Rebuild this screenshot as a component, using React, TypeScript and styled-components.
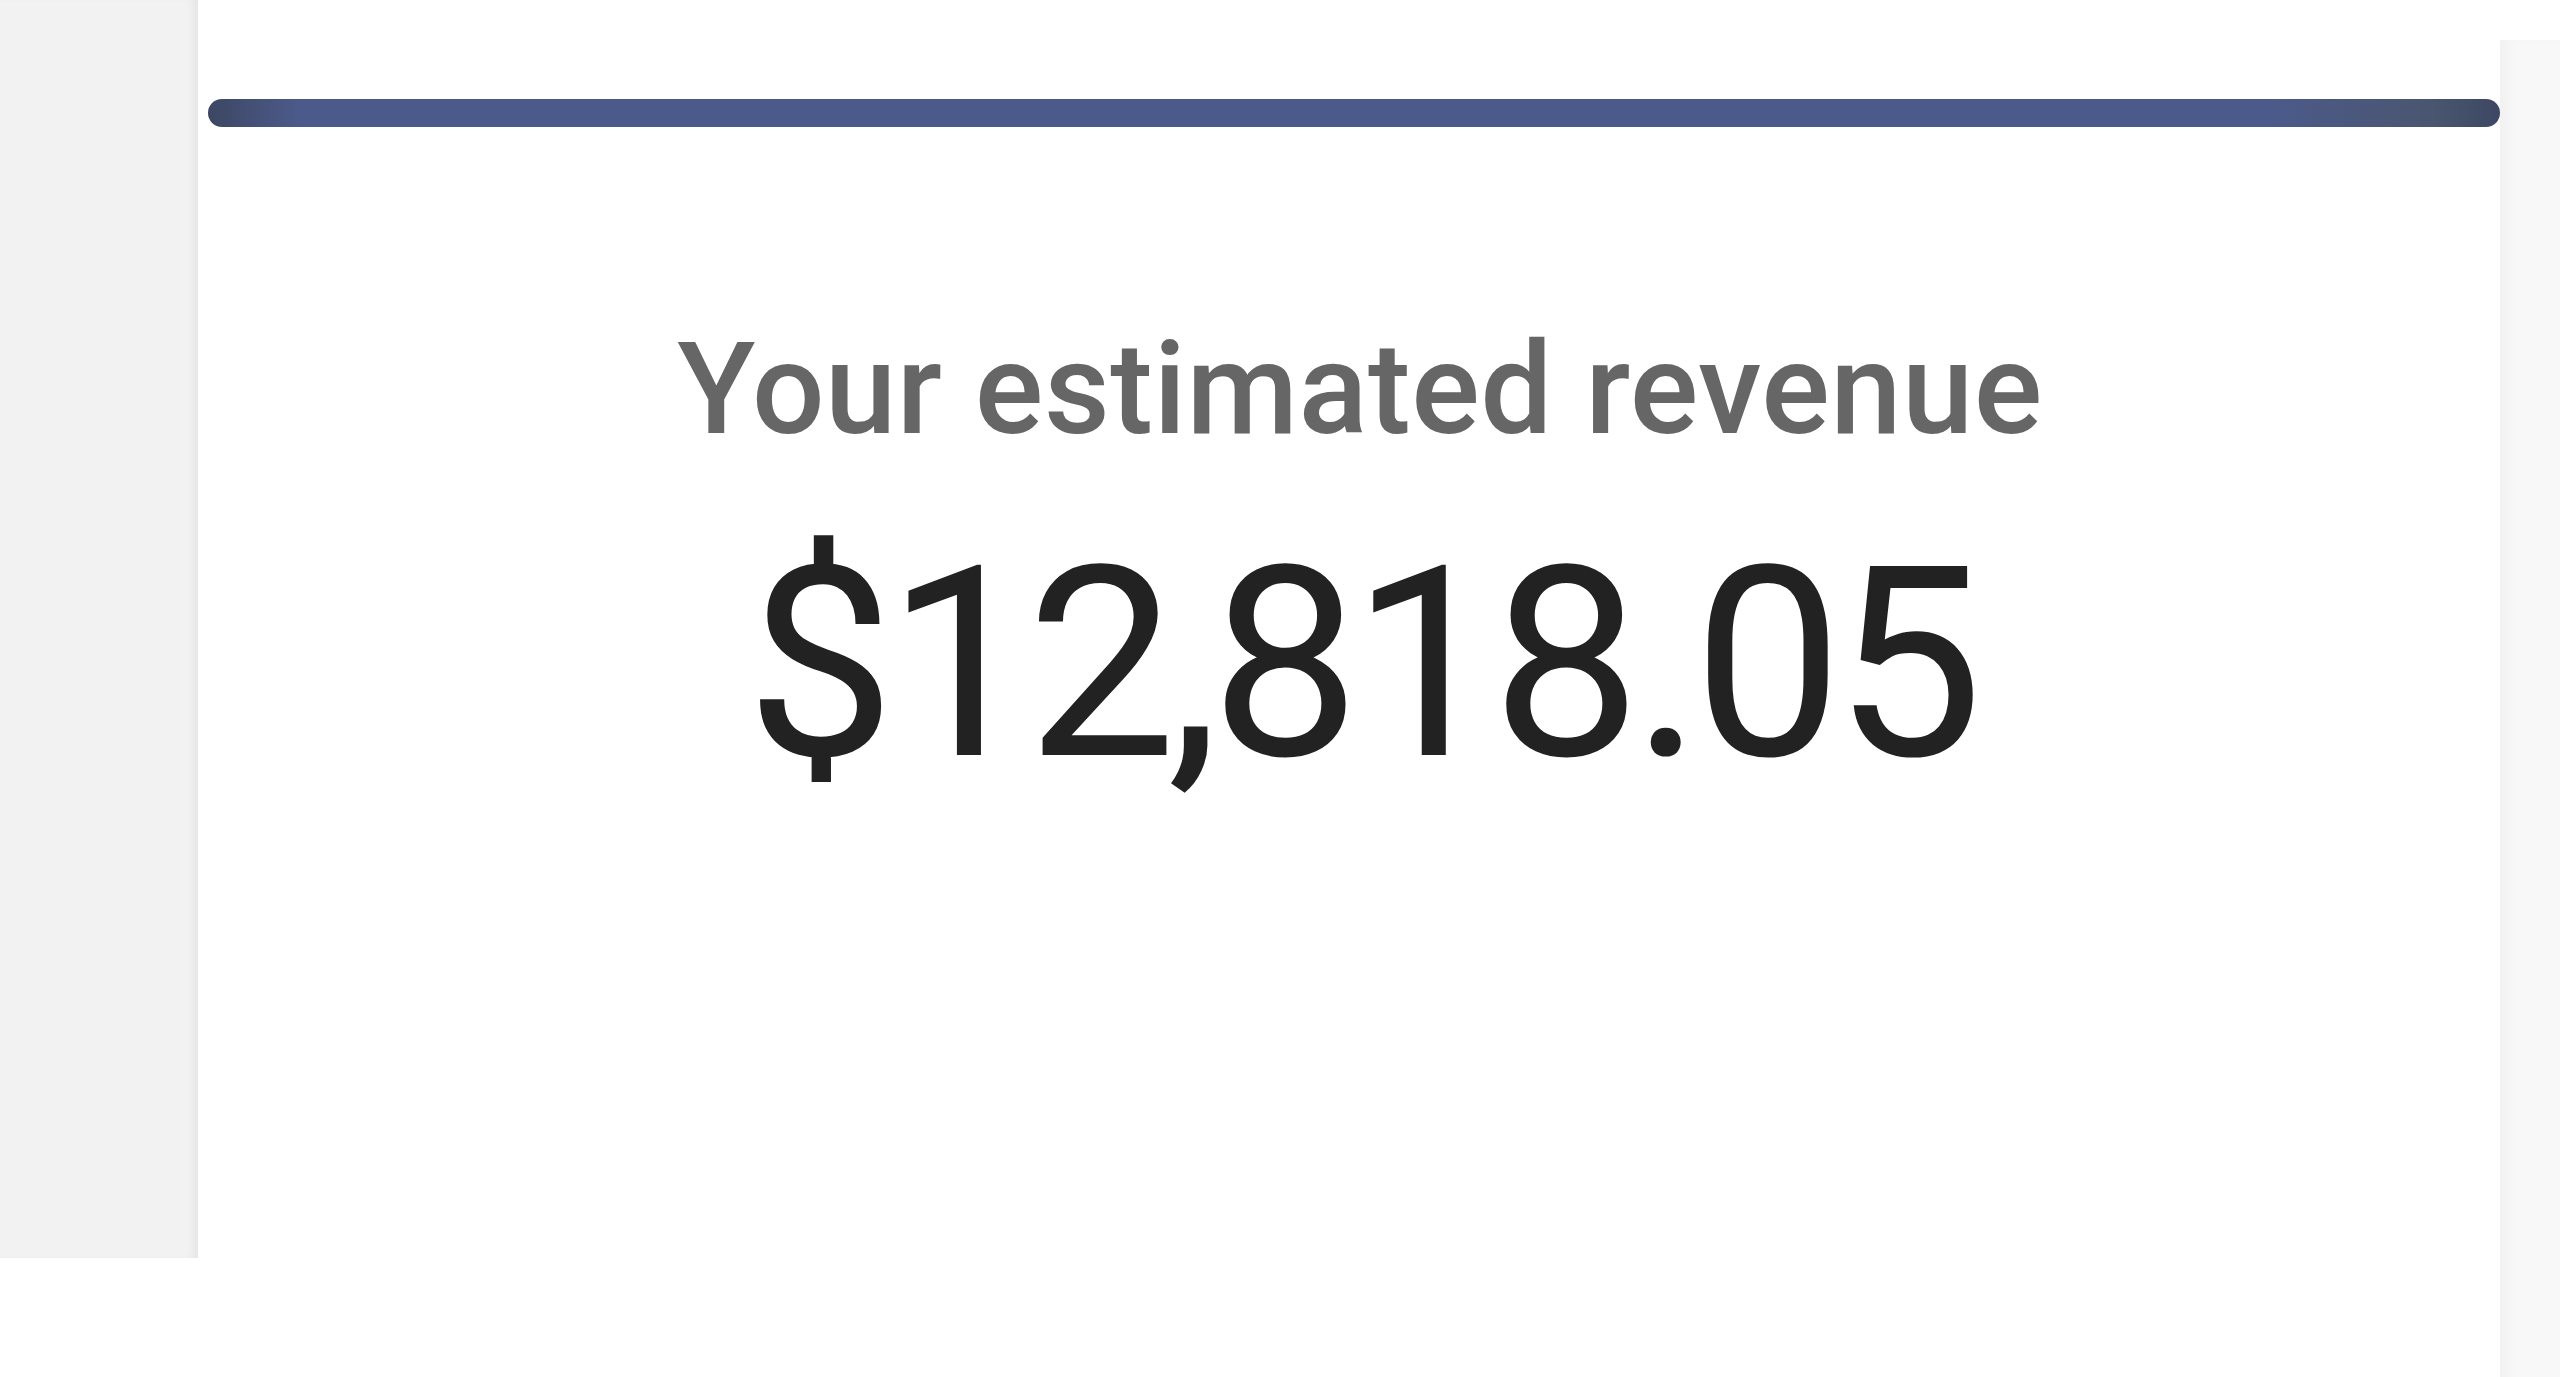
import styled, { createGlobalStyle } from "styled-components";

const GlobalStyle = createGlobalStyle`
  html, body {
    margin: 0;
    padding: 0;
    background: #ffffff;
  }
  body {
    font-family: Roboto, "Liberation Sans", Arial, sans-serif;
  }
`;

const Page = styled.div`
  display: flex;
  align-items: flex-start;
  width: 2560px;
  height: 1377px;
  overflow: hidden;
  background: #ffffff;
`;

const SidePanel = styled.div<{ $side: "left" | "right" }>`
  flex: none;
  width: ${(p) => (p.$side === "left" ? "198px" : "60px")};
  height: ${(p) => (p.$side === "left" ? "1258px" : "1377px")};
  margin-top: ${(p) => (p.$side === "left" ? "0" : "40px")};
  background: ${(p) => (p.$side === "left" ? "#f2f2f2" : "#f8f8f8")};
  box-shadow: ${(p) =>
    p.$side === "left"
      ? "inset -8px 0 10px -4px rgba(0, 0, 0, 0.06)"
      : "inset 14px 0 16px -6px rgba(0, 0, 0, 0.03)"};
`;

const Card = styled.div`
  flex: 1;
  display: flex;
  flex-direction: column;
  align-items: center;
  padding: 99px 0 0 12px;
  margin-left: 10px;
  min-height: 1278px;
  background: #ffffff;
`;

const TopBar = styled.div`
  align-self: stretch;
  margin-left: -12px;
  height: 28px;
  border-radius: 14px;
  background: linear-gradient(
    90deg,
    #3d4763 0%,
    #4b5a8a 4%,
    #4b5a8a 90%,
    #4a5670 97%,
    #3d4763 100%
  );
`;

const Label = styled.div`
  margin-top: 198px;
  font-size: 128px;
  line-height: 1;
  font-weight: 500;
  color: #666666;
  letter-spacing: 0.5px;
`;

const Amount = styled.div`
  margin-top: 78px;
  font-size: 266px;
  line-height: 1;
  font-weight: 400;
  color: #222222;
  letter-spacing: -9px;
`;

export default function App() {
  return (
    <>
      <GlobalStyle />
      <Page>
        <SidePanel $side="left" />
        <Card>
          <TopBar />
          <Label>Your estimated revenue</Label>
          <Amount>$12,818.05</Amount>
        </Card>
        <SidePanel $side="right" />
      </Page>
    </>
  );
}
